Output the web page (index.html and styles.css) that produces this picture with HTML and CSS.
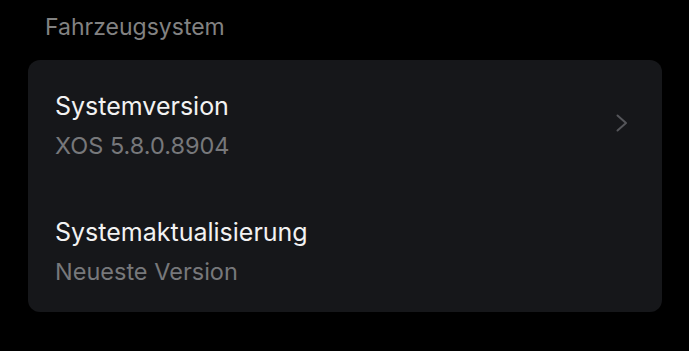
FILE: index.html
```html
<!DOCTYPE html>
<html lang="de">
<head>
<meta charset="utf-8">
<link rel="stylesheet" href="styles.css">
</head>
<body>
<div class="page">
  <div class="section-title">Fahrzeugsystem</div>
  <div class="card">
    <div class="row">
      <div class="texts">
        <div class="title">Systemversion</div>
        <div class="sub">XOS 5.8.0.8904</div>
      </div>
      <svg class="chev" width="12" height="18" viewBox="0 0 12 18"><path d="M1.5 1.5 L10 9 L1.5 16.5" fill="none" stroke="#55565a" stroke-width="2" stroke-linecap="round" stroke-linejoin="round"/></svg>
    </div>
    <div class="row">
      <div class="texts">
        <div class="title">Systemaktualisierung</div>
        <div class="sub">Neueste Version</div>
      </div>
    </div>
  </div>
</div>
</body>
</html>
```
FILE: styles.css
```css
html, body {
  margin: 0;
  padding: 0;
  background: #000;
}
body {
  width: 689px;
  height: 351px;
  overflow: hidden;
  font-family: Inter, "Noto Sans", sans-serif;
}
.page {
  padding-top: 7px;
}
.section-title {
  margin-left: 45px;
  font-size: 23px;
  line-height: 40px;
  color: #828282;
}
.card {
  margin: 13px 0 0 28px;
  width: 634px;
  background: #16171a;
  border-radius: 12px;
}
.row {
  height: 126px;
  box-sizing: border-box;
  padding: 26px 34px 0 27px;
  display: flex;
  justify-content: space-between;
}
.chev {
  margin-top: 28px;
}
.title {
  font-size: 25px;
  line-height: 40px;
  color: #f2f2f2;
}
.sub {
  font-size: 23.5px;
  line-height: 40px;
  color: #77787b;
}
```
